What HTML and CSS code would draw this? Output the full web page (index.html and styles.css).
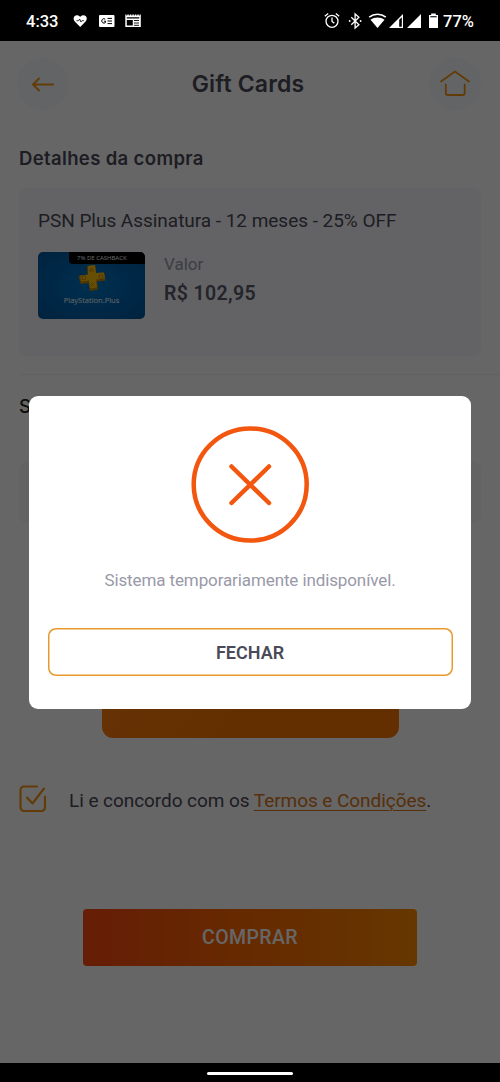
FILE: index.html
```html
<!DOCTYPE html>
<html lang="pt-BR">
<head>
<meta charset="utf-8">
<title>Gift Cards</title>
<link rel="stylesheet" href="styles.css">
</head>
<body>
<div class="phone">
  <header class="status">
    <span class="clock">4:33</span>
    <svg class="status-left" width="70" height="16" viewBox="0 0 70 16" fill="#fff">
      <path d="M6.200 14 .8 8.400C-.8 6.700-.7 4.400.7 3.100c1.600-1.500 4-1.100 5.500.7 1.500-1.800 3.900-2.200 5.500-.7 1.400 1.300 1.500 3.600-.1 5.300z"/>
      <path d="M2.500 7.700h2l1.200-1.700 1.200 3 1-1.300h2" fill="none" stroke="#000" stroke-width=".8"/>
      <rect x="25" y="2" width="15.500" height="12" rx="1"/>
      <path d="M31.300 6.200a2.200 2.200 0 1 0 .2 3.300V8.200h-1.600M33.500 5.400h4.500M33.500 8h4.500M33.500 10.600h4.500" fill="none" stroke="#000" stroke-width="1"/>
      <path d="M51.300 1.500h1v1h1v-1h1.500v1h1v-1h1.500v1h1v-1h1.500v1h1v-1h1.500v1h1v-1h1.500v1h1v-1h1V14h-15.500z"/>
      <path d="M52.800 4.200h12.500v1.200H52.800zM52.800 7h6v5.500h-6z" fill="#000"/>
      <path d="M60 7.500h5M60 10h5M60 12.300h5" stroke="#000" stroke-width=".9"/>
    </svg>
    <svg class="status-right" width="118" height="18" viewBox="0 0 118 18" fill="#fff">
      <g fill="none" stroke="#fff" stroke-width="1.300"><circle cx="8" cy="9.300" r="6"/><path d="M8 5.500v4l2.300 1.600M.8 4.300 4.200 1.500M15.200 4.300l-3.400-2.800"/><path d="m27.300 5.300 7.600 7.400-3.800 3.300V2l3.800 3.300-7.600 7.400"/></g>
      <circle cx="25.700" cy="9" r=".9"/><circle cx="36.600" cy="9" r=".9"/>
      <path d="M45.200 5.200c4.800-3.900 11.800-3.900 16.600 0" fill="none" stroke="#fff" stroke-width="1.600"/>
      <path d="M46.500 7.700c4-3 10-3 14 0L53.500 16z"/>
      <path d="M65 16 79 2v14z"/><path d="M75.200 7.800 77.800 5.200v9.600h-2.600z" fill="#000"/>
      <path d="M83 16 97 2v14zM105 3h2.200V1.500h4.600V3h2.200v13h-9z"/><path d="M106.300 4.200h6.400v1.100h-6.400z" fill="#000"/>
    </svg>
    <span class="charge">77%</span>
  </header>

  <div class="screen">
    <nav class="topbar">
      <span class="round"><svg width="24" height="18" viewBox="0 0 24 18"><path d="M22 9.500H2M8 3.500 2 9.500l6 6" stroke-width="2"/></svg></span>
      <h1>Gift Cards</h1>
      <span class="round home"><svg width="32" height="28" viewBox="0 0 32 28"><path d="m2 12.500 14-10 14 10M6.800 15.500v8.500a2 2 0 0 0 2 2h14.900a2 2 0 0 0 2-2v-8.500" stroke-width="1.800"/></svg></span>
    </nav>
    <h2>Detalhes da compra</h2>
    <section class="card">
      <p class="product">PSN Plus Assinatura - 12 meses - 25% OFF</p>
      <div class="row">
        <div class="thumb">
          <span class="cashback">7% DE CASHBACK</span>
          <svg class="plus" width="30" height="28" viewBox="0 0 30 28"><path d="m10 1 8-1 1 8 8-.5 1.500 8-8.500 1 1 8-8 1.500-1.500-8-8 1-2-8 9-1z" fill="#c58800"/><path d="m11 1 7-1 1 8 8-.5 1 6-9 1 1 8-7 1-1-8-8 1-1-6 8-1z" fill="#ffc20a"/><g fill="none" stroke="#d78b00"><path d="m12.500 6 2-3 2 3z"/><circle cx="24" cy="11.500" r="2"/><path d="M5 11h3.500v3.500H5zM14 18l3 3M17 18l-3 3"/></g></svg>
          <span class="brand"><b>PlayStation</b>.Plus</span>
        </div>
        <div class="price"><span>Valor</span><strong>R$ 102,95</strong></div>
      </div>
    </section>
    <hr>
    <h2 class="second">S</h2>
    <div class="field"></div>
    <div class="balance"></div>
    <div class="terms">
      <svg width="28" height="28" viewBox="0 0 28 28"><path d="M18 1.500H5A3.500 3.500 0 0 0 1.500 5v17.500A3.500 3.500 0 0 0 5 26h17.500a3.500 3.500 0 0 0 3.500-3.500V11.500M8 12.500l5.500 6L25 3.500" stroke-width="2.100"/></svg>
      <p>Li e concordo com os <a>Termos e Condições</a>.</p>
    </div>
    <button class="buy">COMPRAR</button>
    <div class="overlay">
      <div class="modal">
        <svg width="118" height="118" viewBox="0 0 118 118"><ellipse cx="59.200" cy="58.500" rx="56.500" ry="56" stroke-width="4.500"/><path d="m40.500 40.500 37.500 36.500M78 40.500l-37.500 36.500" stroke-width="4.500" stroke-linecap="round"/></svg>
        <p>Sistema temporariamente indisponível.</p>
        <button>FECHAR</button>
      </div>
    </div>
  </div>
  <footer><i></i></footer>
</div>
</body>
</html>
```
FILE: styles.css
```css
* { box-sizing: border-box; }
body { margin: 0; background: #000; font-family: Roboto, sans-serif; color: #4a4a58; }
h1, h2, p { margin: 0; }
button { font-family: inherit; padding: 0; }
svg { display: block; flex: none; }
.phone { width: 500px; height: 1082px; display: flex; flex-direction: column; overflow: hidden; }
.status { height: 41px; flex: none; display: flex; align-items: center; padding: 2px 0 0 26px; color: #fff; font-weight: 500; }
.clock { width: 48px; font-size: 16.500px; }
.status-left { overflow: visible; margin-top: -2px; }
.status-right { margin-left: 180px; margin-top: -2px; }
.charge { font-size: 16.500px; margin-left: 1px; }
.screen { position: relative; height: 1022px; flex: none; background: #fff; padding: 0 19px; overflow: hidden; }
.topbar { display: flex; justify-content: space-between; align-items: center; padding-top: 17px; margin: 0 0 0 -2px; }
.round { width: 52px; height: 52px; border-radius: 50%; background: #f8fbff; display: grid; place-items: center; }
.round svg, .terms svg { fill: none; stroke: #f59310; stroke-linecap: round; stroke-linejoin: round; }
.home svg { margin-top: -3px; }
h1 { font: 600 23px/30px Inter, sans-serif; letter-spacing: .15px; margin-left: -2px; }
h2 { font: 600 18.500px/24px Inter, sans-serif; letter-spacing: .36px; margin-top: 36px; }
.card { height: 168px; margin-top: 18px; padding: 20px 19px; background: #f7f7fc; border-radius: 8px; }
.product { font-size: 19px; line-height: 26px; letter-spacing: -.03px; white-space: nowrap; }
.row { display: flex; gap: 19px; margin-top: 18px; }
.thumb { width: 107px; height: 67px; border-radius: 5px; background: radial-gradient(#0078c4, #0068b4 45%, #00569c); overflow: hidden; display: flex; flex-direction: column; align-items: center; }
.cashback { align-self: flex-end; width: 76px; height: 12px; padding-left: 8px; background: #000; border-radius: 0 0 0 4px; color: #fff; font: 6px/12px "Open Sans", sans-serif; white-space: nowrap; }
.plus { margin-top: 1px; }
.brand { color: #fff; font: 7.500px/12px "Open Sans", sans-serif; margin-top: 1px; }
.brand b { font-weight: 500; }
.price { display: flex; flex-direction: column; gap: 6px; }
.price span { color: #9999a8; font-size: 17px; line-height: 24px; }
.price strong { font: 600 19.500px/24px Roboto, sans-serif; letter-spacing: .38px; color: #5a5a6c; }
hr { height: 1px; border: 0; background: #f2f2f2; margin: 18px -19px 0 0; }
.second { margin-top: 19px; color: #222; font-weight: 500; }
.field { height: 61px; margin-top: 44px; background: #f8f8f8; border-radius: 8px; }
.balance { width: 297px; height: 93px; margin: 122px auto 0; border-radius: 11px; background: linear-gradient(120deg, #ff7e10, #fa7600 55%); }
.terms { display: flex; align-items: center; gap: 22px; margin-top: 47px; }
.terms p { padding-top: 3px; font-size: 19px; line-height: 25px; letter-spacing: -.06px; white-space: nowrap; }
.terms a { color: #d87820; text-decoration: underline; text-decoration-thickness: 1px; text-underline-offset: 3px; }
.buy { display: block; width: 334px; height: 57px; margin: 96px auto 0; border: 0; border-radius: 4px; background: linear-gradient(90deg, #ff4a10, #ff6a00 50%, #ff8a00); color: #fff; font-size: 19.500px; font-weight: 500; letter-spacing: .4px; }
.overlay { position: absolute; inset: 0; background: rgba(0, 0, 0, .6); }
.modal { position: absolute; left: 29px; top: 355px; width: 442px; height: 313px; padding: 30px 19px 0; background: #fff; border-radius: 9px; display: flex; flex-direction: column; align-items: center; }
.modal svg { fill: none; stroke: #f2560f; }
.modal p { margin-top: 24px; font-size: 17px; line-height: 24px; letter-spacing: -.11px; color: #9999a8; white-space: nowrap; }
.modal button { width: 405px; height: 48px; margin-top: 36px; border: 0; box-shadow: inset 0 0 0 1.500px #e89a2c; border-radius: 8px; background: #fff; color: #4a4a58; font-size: 18px; font-weight: 600; }
footer { height: 19px; flex: none; display: grid; place-items: center; background: #000; }
footer i { width: 86px; height: 3px; margin-top: 2px; border-radius: 2px; background: #fff; }
```
